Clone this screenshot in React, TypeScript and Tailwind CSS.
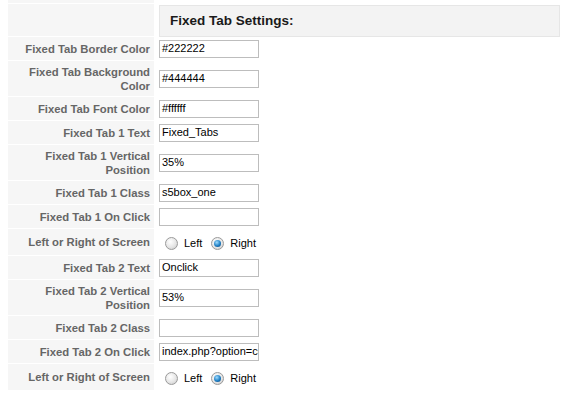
import React from "react";

type Row =
  | { kind: "input"; label: React.ReactNode; value: string; tall?: boolean }
  | { kind: "radio"; label: string };

const rows: Row[] = [
  { kind: "input", label: "Fixed Tab Border Color", value: "#222222" },
  { kind: "input", label: <>Fixed Tab Background<br />Color</>, value: "#444444", tall: true },
  { kind: "input", label: "Fixed Tab Font Color", value: "#ffffff" },
  { kind: "input", label: "Fixed Tab 1 Text", value: "Fixed_Tabs" },
  { kind: "input", label: <>Fixed Tab 1 Vertical<br />Position</>, value: "35%", tall: true },
  { kind: "input", label: "Fixed Tab 1 Class", value: "s5box_one" },
  { kind: "input", label: "Fixed Tab 1 On Click", value: "" },
  { kind: "radio", label: "Left or Right of Screen" },
  { kind: "input", label: "Fixed Tab 2 Text", value: "Onclick" },
  { kind: "input", label: <>Fixed Tab 2 Vertical<br />Position</>, value: "53%", tall: true },
  { kind: "input", label: "Fixed Tab 2 Class", value: "" },
  { kind: "input", label: "Fixed Tab 2 On Click", value: "index.php?option=com_content" },
  { kind: "radio", label: "Left or Right of Screen" },
];

function Radio({ checked }: { checked?: boolean }) {
  return (
    <span className="relative inline-flex h-[13px] w-[13px] items-center justify-center rounded-full border border-[#9a9a9a] bg-[radial-gradient(circle_at_40%_35%,#ffffff_0%,#e6e6e6_55%,#c4c4c4_100%)]">
      {checked && (
        <span className="h-[7px] w-[7px] rounded-full bg-[radial-gradient(circle_at_40%_35%,#9fdcff_0%,#1f7fc4_55%,#0b3f73_100%)]" />
      )}
    </span>
  );
}

function Label({ children }: { children: React.ReactNode }) {
  return (
    <div className="flex w-[146px] shrink-0 items-center justify-end bg-[#f6f6f6] pr-[4px] text-right text-[11.3px] font-bold leading-[14px] text-[#666666]">
      <span>{children}</span>
    </div>
  );
}

export default function App() {
  return (
    <div className="h-[397px] w-[570px] overflow-hidden bg-white font-['Liberation_Sans',Arial,sans-serif]">
      <div className="ml-[8px] flex flex-col gap-px">
        <div className="flex h-[3px]">
          <div className="w-[146px] bg-[#f6f6f6]" />
        </div>
        <div className="flex h-[32px]">
          <Label>{""}</Label>
          <div className="flex pl-[5px] pt-px">
            <div className="flex h-[32px] w-[401px] items-center border border-[#e6e6e6] bg-[#f3f3f3] pl-[10px] text-[13.5px] font-bold text-[#1a1a1a]">
              Fixed Tab Settings:
            </div>
          </div>
        </div>
        {rows.map((r, i) => (
          <div
            key={i}
            className={
              "flex " +
              (r.kind === "radio" ? "h-[26px]" : r.tall ? "h-[35px]" : "h-[23px]")
            }
          >
            <Label>{r.label}</Label>
            <div className="flex items-center pl-[5px]">
              {r.kind === "input" ? (
                <div className="flex h-[18px] w-[100px] items-center overflow-hidden whitespace-nowrap border border-[#bdbdbd] bg-white pl-[2px] text-[11px] text-black">
                  {r.value}
                </div>
              ) : (
                <div className="flex items-center pl-[6px] pt-[2px] text-[11px] text-black">
                  <Radio />
                  <span className="ml-[6px] mr-[9px]">Left</span>
                  <Radio checked />
                  <span className="ml-[6px]">Right</span>
                </div>
              )}
            </div>
          </div>
        ))}
      </div>
    </div>
  );
}
